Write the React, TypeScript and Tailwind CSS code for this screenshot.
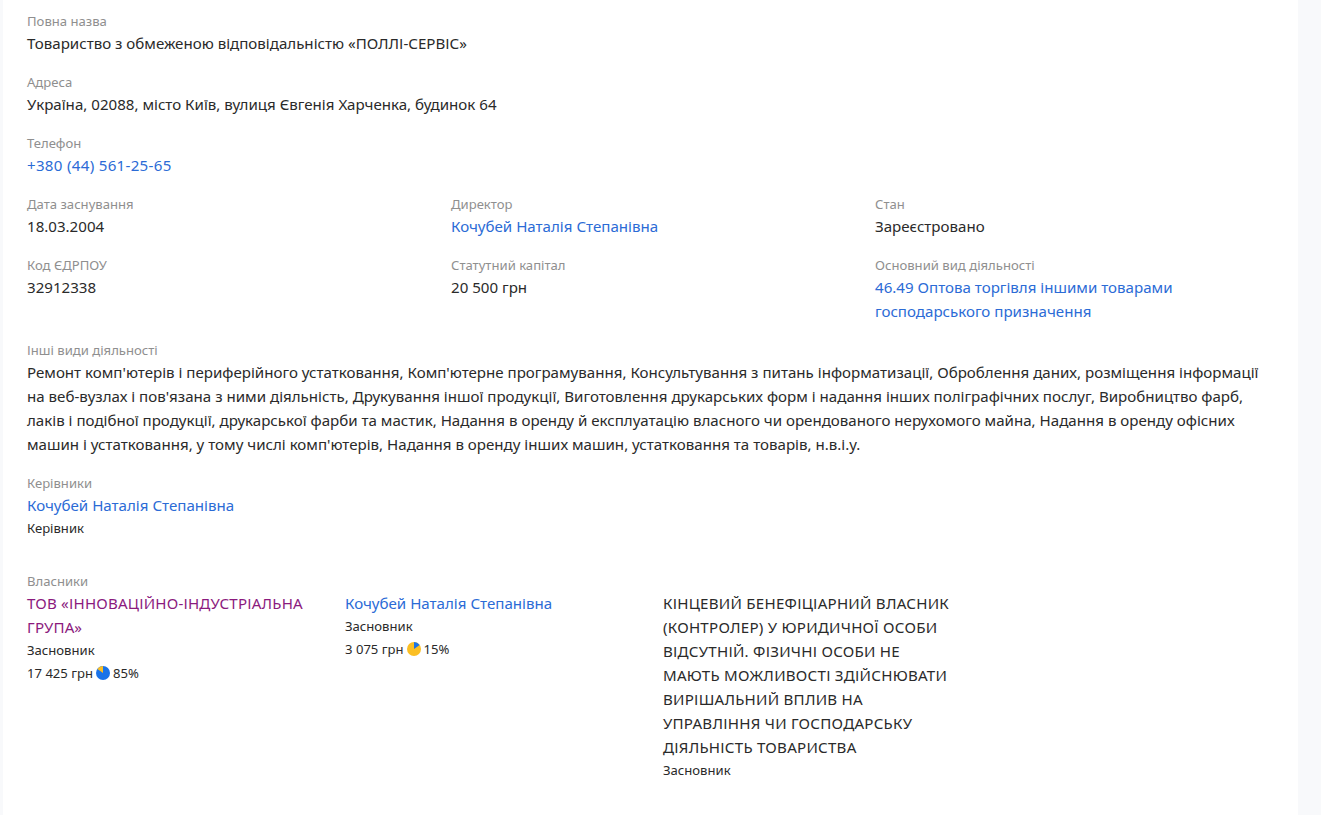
const Label = ({ children }: { children: string }) => (
  <div className="text-[13.1px] leading-[19px] text-[#8f8f8f]">{children}</div>
);

const Field = ({ label, value, link, wide }: { label: string; value: string; link?: boolean; wide?: boolean }) => (
  <div className="mb-[18px]">
    <Label>{label}</Label>
    <div className={`text-[15.1px] leading-6 ${link ? 'text-[#2b6bd6]' : 'text-[#2a2a2a]'} ${wide ? 'tracking-[0.3px]' : ''}`}>
      {value}
    </div>
  </div>
);

const Pie = ({ big }: { big?: boolean }) => (
  <svg width="14" height="14" viewBox="0 0 32 32" className="inline-block mx-[3px] align-[-2px]">
    <circle r="16" cx="16" cy="16" fill={big ? '#1a73e8' : '#fbbf24'} />
    {big ? (
      <path d="M16 16V0A16 16 0 0 0 3.1 6.6Z" fill="#fbbf24" />
    ) : (
      <path d="M16 16V0A16 16 0 0 1 28.9 6.6Z" fill="#1a73e8" />
    )}
  </svg>
);

export default function App() {
  return (
    <div className="min-h-[815px] bg-[#f8f9fb] pl-[3px] pr-[23px] font-['Noto_Sans','Open_Sans',sans-serif]">
      <div className="min-h-[815px] bg-white pl-6 pr-6 pt-3">
        <Field label="Повна назва" value="Товариство з обмеженою відповідальністю «ПОЛЛІ-СЕРВІС»" />
        <Field label="Адреса" value="Україна, 02088, місто Київ, вулиця Євгенія Харченка, будинок 64" />
        <Field label="Телефон" value="+380 (44) 561-25-65" link wide />

        <div className="grid grid-cols-[424px_424px_1fr]">
          <Field label="Дата заснування" value="18.03.2004" />
          <Field label="Директор" value="Кочубей Наталія Степанівна" link />
          <Field label="Стан" value="Зареєстровано" />
          <Field label="Код ЄДРПОУ" value="32912338" />
          <Field label="Статутний капітал" value="20 500 грн" />
          <div className="w-[320px]">
            <Field label="Основний вид діяльності" value="46.49 Оптова торгівля іншими товарами господарського призначення" link />
          </div>
        </div>

        <Field
          label="Інші види діяльності"
          value="Ремонт комп'ютерів і периферійного устатковання, Комп'ютерне програмування, Консультування з питань інформатизації, Оброблення даних, розміщення інформації на веб-вузлах і пов'язана з ними діяльність, Друкування іншої продукції, Виготовлення друкарських форм і надання інших поліграфічних послуг, Виробництво фарб, лаків і подібної продукції, друкарської фарби та мастик, Надання в оренду й експлуатацію власного чи орендованого нерухомого майна, Надання в оренду офісних машин і устатковання, у тому числі комп'ютерів, Надання в оренду інших машин, устатковання та товарів, н.в.і.у."
        />

        <div className="mb-[32px]">
          <Label>Керівники</Label>
          <div className="text-[15.1px] leading-6 text-[#2b6bd6]">Кочубей Наталія Степанівна</div>
          <div className="text-[13.1px] leading-[23px] text-[#2a2a2a]">Керівник</div>
        </div>

        <Label>Власники</Label>
        <div className="grid grid-cols-[318px_318px_318px] text-[13.1px] leading-[23px] text-[#2a2a2a]">
          <div className="pr-[10px]">
            <div className="text-[15.1px] leading-6 tracking-[0.2px] text-[#8b1a7e]">ТОВ «ІННОВАЦІЙНО-ІНДУСТРІАЛЬНА ГРУПА»</div>
            <div>Засновник</div>
            <div>17 425 грн<Pie big />85%</div>
          </div>
          <div className="pr-[30px]">
            <div className="text-[15.1px] leading-6 text-[#2b6bd6]">Кочубей Наталія Степанівна</div>
            <div>Засновник</div>
            <div>3 075 грн<Pie />15%</div>
          </div>
          <div className="pr-[26px]">
            <div className="text-[15.1px] leading-6 tracking-[0.25px]">КІНЦЕВИЙ БЕНЕФІЦІАРНИЙ ВЛАСНИК (КОНТРОЛЕР) У ЮРИДИЧНОЇ ОСОБИ ВІДСУТНІЙ. ФІЗИЧНІ ОСОБИ НЕ МАЮТЬ МОЖЛИВОСТІ ЗДІЙСНЮВАТИ ВИРІШАЛЬНИЙ ВПЛИВ НА УПРАВЛІННЯ ЧИ ГОСПОДАРСЬКУ ДІЯЛЬНІСТЬ ТОВАРИСТВА</div>
            <div>Засновник</div>
          </div>
        </div>
      </div>
    </div>
  );
}
